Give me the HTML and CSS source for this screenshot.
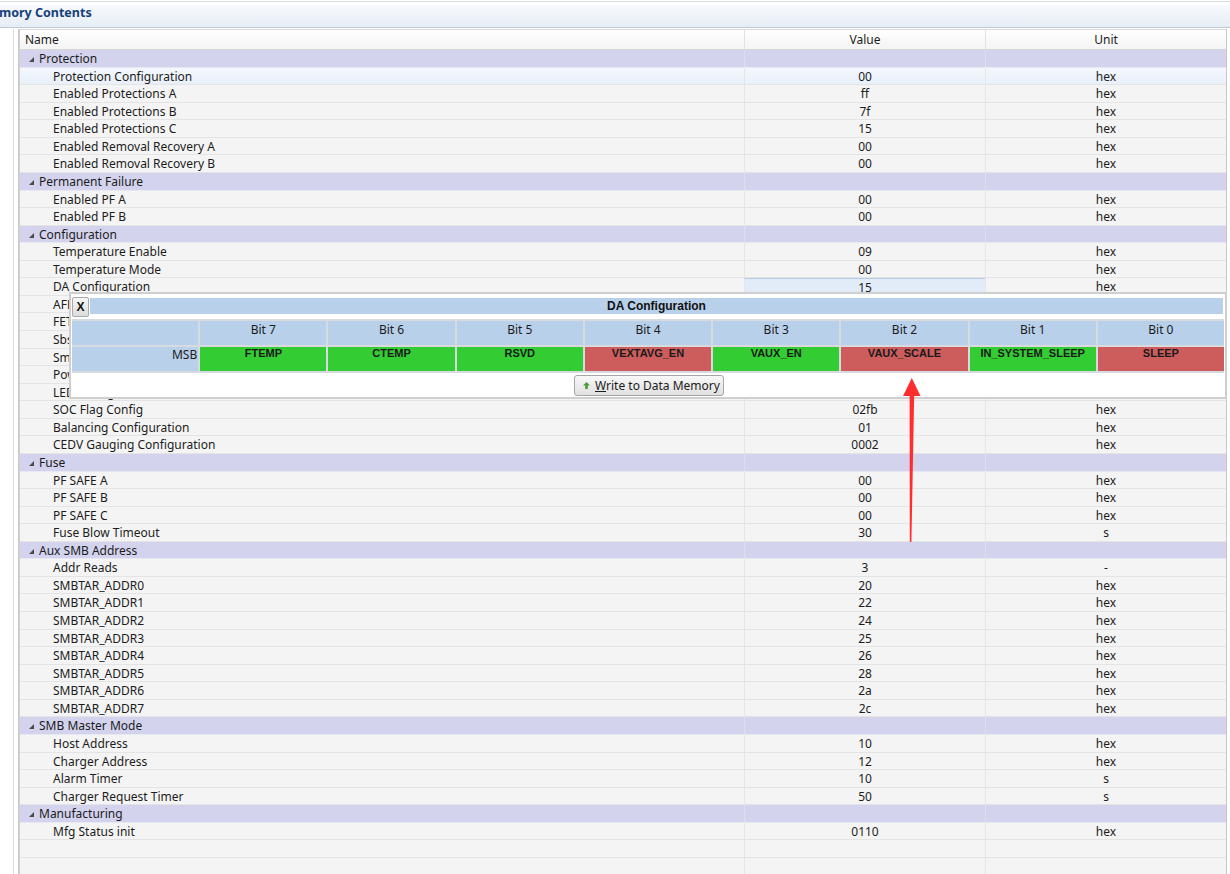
FILE: index.html
```html
<!DOCTYPE html>
<html>
<head>
<meta charset="utf-8">
<link rel="stylesheet" href="styles.css">
</head>
<body>
<div class="titlebar"><span class="title">mory Contents</span></div>
<div class="main">
  <div class="leftpane"></div>
  <div class="table">
    <div class="row head"><div class="c name">Name</div><div class="c val">Value</div><div class="c unit">Unit</div></div>

    <div class="row group"><div class="c name"><span class="tri"></span>Protection</div><div class="c val"></div><div class="c unit"></div></div>
    <div class="row sel"><div class="c name child">Protection Configuration</div><div class="c val">00</div><div class="c unit">hex</div></div>
    <div class="row"><div class="c name child">Enabled Protections A</div><div class="c val">ff</div><div class="c unit">hex</div></div>
    <div class="row"><div class="c name child">Enabled Protections B</div><div class="c val">7f</div><div class="c unit">hex</div></div>
    <div class="row"><div class="c name child">Enabled Protections C</div><div class="c val">15</div><div class="c unit">hex</div></div>
    <div class="row"><div class="c name child">Enabled Removal Recovery A</div><div class="c val">00</div><div class="c unit">hex</div></div>
    <div class="row"><div class="c name child">Enabled Removal Recovery B</div><div class="c val">00</div><div class="c unit">hex</div></div>

    <div class="row group"><div class="c name"><span class="tri"></span>Permanent Failure</div><div class="c val"></div><div class="c unit"></div></div>
    <div class="row"><div class="c name child">Enabled PF A</div><div class="c val">00</div><div class="c unit">hex</div></div>
    <div class="row"><div class="c name child">Enabled PF B</div><div class="c val">00</div><div class="c unit">hex</div></div>

    <div class="row group"><div class="c name"><span class="tri"></span>Configuration</div><div class="c val"></div><div class="c unit"></div></div>
    <div class="row"><div class="c name child">Temperature Enable</div><div class="c val">09</div><div class="c unit">hex</div></div>
    <div class="row"><div class="c name child">Temperature Mode</div><div class="c val">00</div><div class="c unit">hex</div></div>
    <div class="row"><div class="c name child">DA Configuration</div><div class="c val edit">15</div><div class="c unit">hex</div></div>
    <div class="row"><div class="c name child">AFE Protection Control</div><div class="c val"></div><div class="c unit"></div></div>
    <div class="row"><div class="c name child">FET Options</div><div class="c val"></div><div class="c unit"></div></div>
    <div class="row"><div class="c name child">Sbs Gauging Configuration</div><div class="c val"></div><div class="c unit"></div></div>
    <div class="row"><div class="c name child">Smb Configuration</div><div class="c val"></div><div class="c unit"></div></div>
    <div class="row"><div class="c name child">Power Config</div><div class="c val"></div><div class="c unit"></div></div>
    <div class="row"><div class="c name child">LED Configuration</div><div class="c val"></div><div class="c unit"></div></div>
    <div class="row"><div class="c name child">SOC Flag Config</div><div class="c val">02fb</div><div class="c unit">hex</div></div>
    <div class="row"><div class="c name child">Balancing Configuration</div><div class="c val">01</div><div class="c unit">hex</div></div>
    <div class="row"><div class="c name child">CEDV Gauging Configuration</div><div class="c val">0002</div><div class="c unit">hex</div></div>

    <div class="row group"><div class="c name"><span class="tri"></span>Fuse</div><div class="c val"></div><div class="c unit"></div></div>
    <div class="row"><div class="c name child">PF SAFE A</div><div class="c val">00</div><div class="c unit">hex</div></div>
    <div class="row"><div class="c name child">PF SAFE B</div><div class="c val">00</div><div class="c unit">hex</div></div>
    <div class="row"><div class="c name child">PF SAFE C</div><div class="c val">00</div><div class="c unit">hex</div></div>
    <div class="row"><div class="c name child">Fuse Blow Timeout</div><div class="c val">30</div><div class="c unit">s</div></div>

    <div class="row group"><div class="c name"><span class="tri"></span>Aux SMB Address</div><div class="c val"></div><div class="c unit"></div></div>
    <div class="row"><div class="c name child">Addr Reads</div><div class="c val">3</div><div class="c unit">-</div></div>
    <div class="row"><div class="c name child">SMBTAR_ADDR0</div><div class="c val">20</div><div class="c unit">hex</div></div>
    <div class="row"><div class="c name child">SMBTAR_ADDR1</div><div class="c val">22</div><div class="c unit">hex</div></div>
    <div class="row"><div class="c name child">SMBTAR_ADDR2</div><div class="c val">24</div><div class="c unit">hex</div></div>
    <div class="row"><div class="c name child">SMBTAR_ADDR3</div><div class="c val">25</div><div class="c unit">hex</div></div>
    <div class="row"><div class="c name child">SMBTAR_ADDR4</div><div class="c val">26</div><div class="c unit">hex</div></div>
    <div class="row"><div class="c name child">SMBTAR_ADDR5</div><div class="c val">28</div><div class="c unit">hex</div></div>
    <div class="row"><div class="c name child">SMBTAR_ADDR6</div><div class="c val">2a</div><div class="c unit">hex</div></div>
    <div class="row"><div class="c name child">SMBTAR_ADDR7</div><div class="c val">2c</div><div class="c unit">hex</div></div>

    <div class="row group"><div class="c name"><span class="tri"></span>SMB Master Mode</div><div class="c val"></div><div class="c unit"></div></div>
    <div class="row"><div class="c name child">Host Address</div><div class="c val">10</div><div class="c unit">hex</div></div>
    <div class="row"><div class="c name child">Charger Address</div><div class="c val">12</div><div class="c unit">hex</div></div>
    <div class="row"><div class="c name child">Alarm Timer</div><div class="c val">10</div><div class="c unit">s</div></div>
    <div class="row"><div class="c name child">Charger Request Timer</div><div class="c val">50</div><div class="c unit">s</div></div>

    <div class="row group"><div class="c name"><span class="tri"></span>Manufacturing</div><div class="c val"></div><div class="c unit"></div></div>
    <div class="row"><div class="c name child">Mfg Status init</div><div class="c val">0110</div><div class="c unit">hex</div></div>
    <div class="row"><div class="c name"></div><div class="c val"></div><div class="c unit"></div></div>
    <div class="row"><div class="c name"></div><div class="c val"></div><div class="c unit"></div></div>
    <div class="row"><div class="c name"></div><div class="c val"></div><div class="c unit"></div></div>
  </div>
</div>

<div class="popup">
  <div class="ptop">
    <div class="xbtn">X</div>
    <div class="ptitle">DA Configuration</div>
  </div>
  <div class="bits">
    <div class="bh"></div>
    <div class="bh">Bit 7</div>
    <div class="bh">Bit 6</div>
    <div class="bh">Bit 5</div>
    <div class="bh">Bit 4</div>
    <div class="bh">Bit 3</div>
    <div class="bh">Bit 2</div>
    <div class="bh">Bit 1</div>
    <div class="bh">Bit 0</div>
    <div class="bh msb">MSB</div>
    <div class="bv on">FTEMP</div>
    <div class="bv on">CTEMP</div>
    <div class="bv on">RSVD</div>
    <div class="bv off">VEXTAVG_EN</div>
    <div class="bv on">VAUX_EN</div>
    <div class="bv off">VAUX_SCALE</div>
    <div class="bv on">IN_SYSTEM_SLEEP</div>
    <div class="bv off">SLEEP</div>
  </div>
  <div class="pfoot">
    <div class="wbtn"><svg class="wicon" width="7" height="7" viewBox="0 0 7 7"><polygon points="3.5,0 7,3.5 4.8,3.5 4.8,7 2.2,7 2.2,3.5 0,3.5" fill="#4a9a3a"/></svg><span class="wtext"><u>W</u>rite to Data Memory</span></div>
  </div>
</div>

<svg class="arrow" width="1230" height="874" viewBox="0 0 1230 874">
  <polygon points="909.8,542 911.4,542 914.2,394 909.6,394" fill="#ff2d2d"/>
  <polygon points="903,396 920.5,396 911.8,378" fill="#ff2d2d"/>
</svg>
</body>
</html>
```
FILE: styles.css
```css
* { box-sizing: border-box; }
html, body {
  margin: 0;
  padding: 0;
}
body {
  width: 1230px;
  height: 874px;
  overflow: hidden;
  background: #ffffff;
  font-family: "Noto Sans", "Open Sans", sans-serif;
  font-size: 12px;
  color: #1c1c1c;
  position: relative;
}
.titlebar {
  margin-top: 1px;
  border-top: 1px solid #d6dde8;
  height: 27px;
  margin-bottom: 1px;
  padding-top: 1px;
  background: linear-gradient(#ffffff 0px, #ffffff 2px, #f7f9fc 3px, #e5ecf6 27px);
  border-bottom: 1px solid #c4c8ce;
}
.title {
  display: inline-block;
  margin-left: -1px;
  margin-top: 1px;
  font-weight: bold;
  font-size: 12.5px;
  color: #15407a;
}
.main {
  display: flex;
  height: 846px;
}
.leftpane {
  width: 19px;
  border-left: 13px solid #ffffff;
  border-right: 1px solid #c9c9c9;
  box-shadow: inset 1px 0 0 #dcdcdc;
  background: #ffffff;
}
.table {
  width: 1208px;
  border-left: 1px solid #d0d0d0;
  border-right: 1px solid #c8c8c8;
  border-top: 1px solid #d8d8d8;
  background: #f4f4f4;
}
.row {
  display: grid;
  grid-template-columns: 724px 241px 1fr;
  height: 17.57px;
  line-height: 17px;
  background: #f4f4f4;
  border-bottom: 1px solid #e4e4e4;
}
.row.head {
  height: 20px;
  line-height: 20px;
  background: linear-gradient(#ffffff, #f4f4f4);
  border-bottom: 1px solid #d8d8d8;
}
.row.head .name { padding-left: 5px; }
.c {
  white-space: nowrap;
  overflow: hidden;
}
.val, .unit {
  text-align: center;
  border-left: 1px solid #e6e6e6;
}
.head .val, .head .unit { border-left: 1px solid #e2e2e2; }
.row.group {
  background: #d3d3ee;
  border-bottom: 1px solid #e8e8f4;
}
.group .val, .group .unit { border-left: 1px solid #dedef2; }
.row.sel {
  background: linear-gradient(#f4f8fd, #e9f0fa);
}
.name { padding-left: 9px; }
.name.child { padding-left: 33px; }
.tri {
  display: inline-block;
  width: 0;
  height: 0;
  border-left: 5px solid transparent;
  border-bottom: 5px solid #4a4a4a;
  margin-right: 5px;
  vertical-align: 1px;
}
.val.edit {
  background: #e2ecf8;
  border-top: 1px solid #b6cbe6;
}

/* popup */
.popup {
  position: absolute;
  left: 69px;
  top: 292px;
  width: 1158px;
  height: 107px;
  background: #ffffff;
  border: 2px solid #cfcfcf;
  padding: 2px 1px 0 1px;
}
.ptop {
  display: flex;
  align-items: flex-start;
  gap: 1px;
  height: 23px;
}
.xbtn {
  width: 17px;
  height: 20px;
  margin-top: 1px;
  border: 1px solid #a9a9a9;
  border-radius: 2px;
  background: linear-gradient(#f6f6f6, #dcdcdc);
  font-family: "Liberation Sans", Arial, sans-serif;
  font-weight: bold;
  font-size: 12px;
  line-height: 19px;
  text-align: center;
  color: #111;
}
.ptitle {
  flex: 1;
  height: 16px;
  margin-top: 2px;
  margin-right: 1px;
  background: #b8d0ea;
  text-align: center;
  font-family: "Liberation Sans", Arial, sans-serif;
  font-weight: bold;
  font-size: 12px;
  line-height: 16px;
  color: #111;
}
.bits {
  display: grid;
  grid-template-columns: repeat(9, 1fr);
  grid-template-rows: 24px 24px;
  gap: 2px;
  background: #d7dbe0;
  border-top: 2px solid #d7dbe0;
  border-bottom: 2px solid #d7dbe0;
}
.bh {
  background: #b8d0ea;
  text-align: center;
  line-height: 18px;
}
.bh.msb {
  text-align: right;
  padding-right: 1px;
  line-height: 16px;
}
.bv {
  text-align: center;
  font-family: "Liberation Sans", Arial, sans-serif;
  font-weight: bold;
  font-size: 11px;
  line-height: 13px;
  color: #1a1a1a;
}
.bv.on { background: #33cc33; }
.bv.off { background: #cd5c5c; }
.pfoot {
  display: flex;
  justify-content: center;
  padding-top: 2px;
  padding-left: 2px;
}
.wbtn {
  display: flex;
  align-items: center;
  gap: 5px;
  height: 21px;
  width: 150px;
  padding-left: 8px;
  border: 1px solid #a6a6a6;
  border-radius: 3px;
  background: linear-gradient(#f8f8f8, #e0e0e0);
  color: #1c1c1c;
  font-size: 12px;
  white-space: nowrap;
}
.wicon { flex: none; }
.arrow {
  position: absolute;
  left: 0;
  top: 0;
  pointer-events: none;
}
```
